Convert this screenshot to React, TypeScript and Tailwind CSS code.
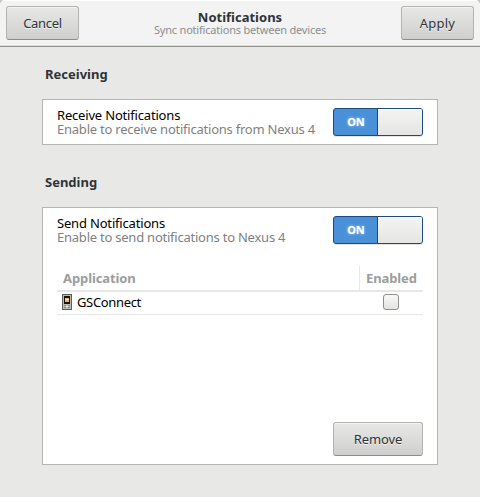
import React from "react";

const raised =
  "flex h-[34px] shrink-0 items-center justify-center rounded-[3px] border border-[#b3b3b0] border-b-[#8c8d88] bg-linear-to-b from-[#e8e8e6] to-[#cfd0cd] text-[13px] leading-none text-[#2e3436] shadow-[inset_0_1px_0_#f4f4f3] [text-shadow:0_1px_0_#f3f3f3]";

function Toggle() {
  return (
    <button
      type="button"
      role="switch"
      aria-checked="true"
      className="flex h-7 w-[90px] shrink-0 rounded-[3px] border border-[#1c4a7e] bg-[#4a90d9] shadow-[0_1px_0_#e4e4e2]"
    >
      <span className="flex h-full w-[43px] items-center justify-center pl-[1px] text-[11px] font-bold text-white [text-shadow:0_0_3px_#ffffffa0]">
        ON
      </span>
      <span className="h-full flex-1 rounded-r-[2px] border-l border-[#1c4a7e] bg-linear-to-b from-[#f4f4f4] to-[#e5e5e3] shadow-[inset_0_1px_0_#ffffff]" />
    </button>
  );
}

function SettingRow({ title, detail }: { title: string; detail: string }) {
  return (
    <div className="flex justify-between">
      <div className="whitespace-nowrap text-[13px] leading-[14px]">
        <div className="tracking-[-0.18px] text-black">{title}</div>
        <div className="tracking-[-0.23px] text-[#7f7f7f]">{detail}</div>
      </div>
      <Toggle />
    </div>
  );
}

function PhoneIcon() {
  return (
    <svg width="10" height="16" viewBox="0 0 10 16" shapeRendering="crispEdges" className="relative -top-px">
      <rect width="10" height="16" rx="1" fill="#5d5f5c" />
      <rect x="1" y="1" width="8" height="14" fill="#babdb6" />
      <rect x="2" y="2" width="6" height="8" fill="#171410" />
      <rect x="3" y="4" width="4" height="4" fill="#e9b96e" />
      <rect x="3" y="5" width="4" height="1" fill="#f6dcae" />
      <rect x="2" y="11" width="2" height="1" fill="#858782" />
      <rect x="6" y="11" width="2" height="1" fill="#858782" />
      <rect x="4" y="12" width="2" height="1" fill="#eeeeec" />
      <rect x="2" y="13" width="2" height="1" fill="#858782" />
      <rect x="6" y="13" width="2" height="1" fill="#858782" />
    </svg>
  );
}

export default function App() {
  return (
    <div className="h-[497px] w-[480px] overflow-hidden bg-[#c5c5c3] font-['Noto_Sans','Open_Sans',sans-serif]">
      <div className="h-full overflow-hidden rounded-t-[5px] bg-[#e8e8e6]">
        <header className="flex h-[47px] items-start justify-between border-b border-[#8f908b] bg-[#f3f3f3] px-1.5 pt-1.5 shadow-[inset_0_1px_0_#ffffff,inset_0_-1px_0_#dededc]">
          <button type="button" className={`${raised} w-[73px] tracking-[-0.3px]`}>Cancel</button>
          <div className="whitespace-nowrap pt-[5px] text-center">
            <h1 className="text-[13px] font-bold leading-[13px] text-[#2e3436]">Notifications</h1>
            <p className="text-[11px] leading-[12px] tracking-[-0.2px] text-[#8b8e8f]">Sync notifications between devices</p>
          </div>
          <button type="button" className={`${raised} w-[73px] tracking-[0.2px]`}>Apply</button>
        </header>

        <main className="px-[42px] pt-[19px]">
          <h2 className="pl-[3px] text-[13px] font-bold leading-4 text-[#2e3436]">Receiving</h2>
          <section className="mt-[17px] h-[46px] border border-[#b5b6b2] bg-white px-3.5 pt-2">
            <SettingRow title="Receive Notifications" detail="Enable to receive notifications from Nexus 4" />
          </section>

          <h2 className="mt-[29px] pl-[3px] text-[13px] font-bold leading-4 text-[#2e3436]">Sending</h2>
          <section className="mt-[17px] flex h-[258px] flex-col border border-[#b5b6b2] bg-white px-3.5 pb-2 pt-2">
            <SettingRow title="Send Notifications" detail="Enable to send notifications to Nexus 4" />
            <div className="mt-[22px] text-[13px]">
              <div className="flex h-[26px] border-b-2 border-[#e7e7e7] font-bold leading-6 text-[#9b9d9e]">
                <div className="w-[302px] pl-1.5 tracking-[-0.1px]">Application</div>
                <div className="flex-1 border-l border-[#e7e7e7] pl-1.5 tracking-[-0.1px]">Enabled</div>
              </div>
              <div className="flex h-[23px] border-b border-[#e7e7e7] text-black">
                <div className="flex w-[302px] items-center gap-[5px] pl-[5px]">
                  <PhoneIcon />
                  <span className="tracking-[-0.35px]">GSConnect</span>
                </div>
                <div className="flex flex-1 justify-center pt-0.5">
                  <span role="checkbox" aria-checked="false" className="h-4 w-4 rounded-[3px] border border-[#8f908c] bg-linear-to-b from-[#f8f8f8] to-[#e4e4e2]" />
                </div>
              </div>
            </div>
            <button type="button" className={`${raised} mt-auto w-[90px] self-end tracking-[-0.1px]`}>Remove</button>
          </section>
        </main>
      </div>
    </div>
  );
}
